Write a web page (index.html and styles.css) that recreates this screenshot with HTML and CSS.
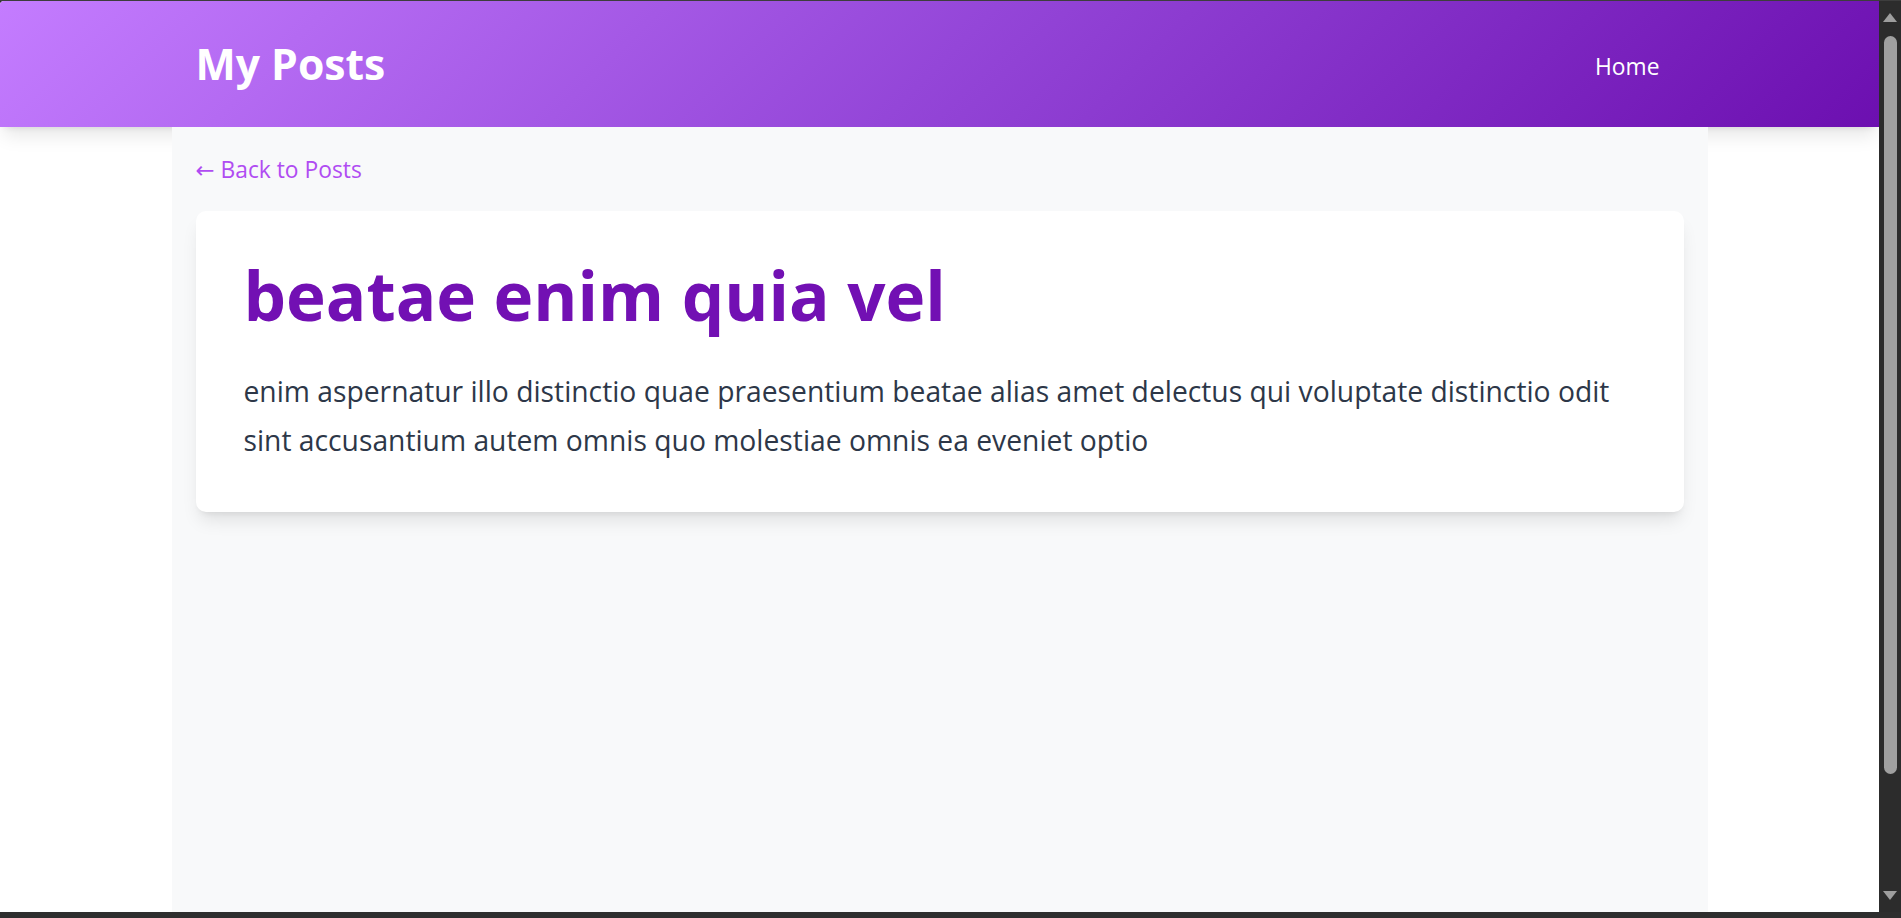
FILE: index.html
```html
<!DOCTYPE html>
<html lang="en">
<head>
<meta charset="utf-8">
<title>My Posts</title>
<link rel="stylesheet" href="styles.css">
</head>
<body>
<div class="window">
  <div class="viewport">
    <header class="site-header">
      <div class="header-inner">
        <h1 class="brand">My Posts</h1>
        <nav class="nav"><a href="#" class="nav-link">Home</a></nav>
      </div>
    </header>
    <main class="main">
      <div class="back-row"><a href="#" class="back-link">← Back to Posts</a></div>
      <article class="post-card">
        <h2 class="post-title">beatae enim quia vel</h2>
        <p class="post-body">enim aspernatur illo distinctio quae praesentium beatae alias amet delectus qui voluptate distinctio odit sint accusantium autem omnis quo molestiae omnis ea eveniet optio</p>
      </article>
    </main>
  </div>
  <div class="scrollbar">
    <span class="arrow arrow-up"></span>
    <span class="thumb"></span>
    <span class="arrow arrow-down"></span>
  </div>
</div>
<div class="frame-bottom"></div>
</body>
</html>
```
FILE: styles.css
```css
html, body {
  margin: 0;
  padding: 0;
}
body {
  height: 918px;
  overflow: hidden;
  display: flex;
  flex-direction: column;
  background: #2c2c2c;
  font-family: "Open Sans", "Noto Sans", "DejaVu Sans", sans-serif;
}
.window {
  flex: 1;
  min-height: 0;
  display: flex;
  border-top: 1px solid #3d3d3d;
}
.viewport {
  flex: 1;
  min-width: 0;
  display: flex;
  flex-direction: column;
  background: #ffffff;
  overflow: hidden;
  border-top-left-radius: 4px;
}
.site-header {
  flex: none;
  height: 126px;
  display: flex;
  align-items: center;
  background: linear-gradient(135deg, #c47cff 0%, #9446d8 50%, #6c0fb0 100%);
  box-shadow: 0 12px 18px -4px rgba(0, 0, 0, 0.1), 0 5px 7px -5px rgba(0, 0, 0, 0.1);
}
.header-inner {
  width: 100%;
  max-width: 1536px;
  margin: 0 auto;
  padding: 0 24px;
  box-sizing: border-box;
  display: flex;
  align-items: center;
  justify-content: space-between;
}
.brand {
  margin: 0;
  font-size: 42.7px;
  line-height: 48px;
  font-weight: 700;
  color: #ffffff;
}
.nav {
  display: flex;
}
.nav-link {
  color: #ffffff;
  text-decoration: none;
  font-size: 22.8px;
  line-height: 33px;
  padding: 4px 24px 0 24px;
}
.main {
  flex: 1;
  width: 100%;
  max-width: 1536px;
  margin: 0 auto;
  box-sizing: border-box;
  padding: 24px;
  background: #f8f9fa;
}
.back-row {
  display: flex;
  padding-top: 2px;
  margin-bottom: 24px;
}
.back-link {
  color: #b04cf2;
  text-decoration: none;
  font-size: 22.8px;
  line-height: 34px;
}
.post-card {
  background: #ffffff;
  border-radius: 10px;
  padding: 48px;
  box-shadow: 0 12px 18px -4px rgba(0, 0, 0, 0.1), 0 5px 7px -5px rgba(0, 0, 0, 0.1);
}
.post-title {
  margin: 0 0 36px 0;
  font-size: 67.3px;
  line-height: 72px;
  font-weight: 700;
  color: #7210b3;
}
.post-body {
  margin: 0;
  font-size: 28.25px;
  line-height: 48.6px;
  color: #2d3748;
}
.scrollbar {
  flex: none;
  width: 22px;
  background: #2c2c2c;
  display: flex;
  flex-direction: column;
  align-items: center;
  padding: 12px 0 12px 0;
  box-sizing: border-box;
}
.arrow {
  width: 0;
  height: 0;
  border-left: 7px solid transparent;
  border-right: 7px solid transparent;
}
.arrow-up {
  border-bottom: 9px solid #9e9e9e;
}
.arrow-down {
  margin-top: auto;
  border-top: 9px solid #9e9e9e;
}
.thumb {
  margin-top: 14px;
  width: 13px;
  height: 738px;
  border-radius: 7px;
  background: #a0a0a0;
}
.frame-bottom {
  flex: none;
  height: 6px;
  background: #2e2e2e;
}
```
